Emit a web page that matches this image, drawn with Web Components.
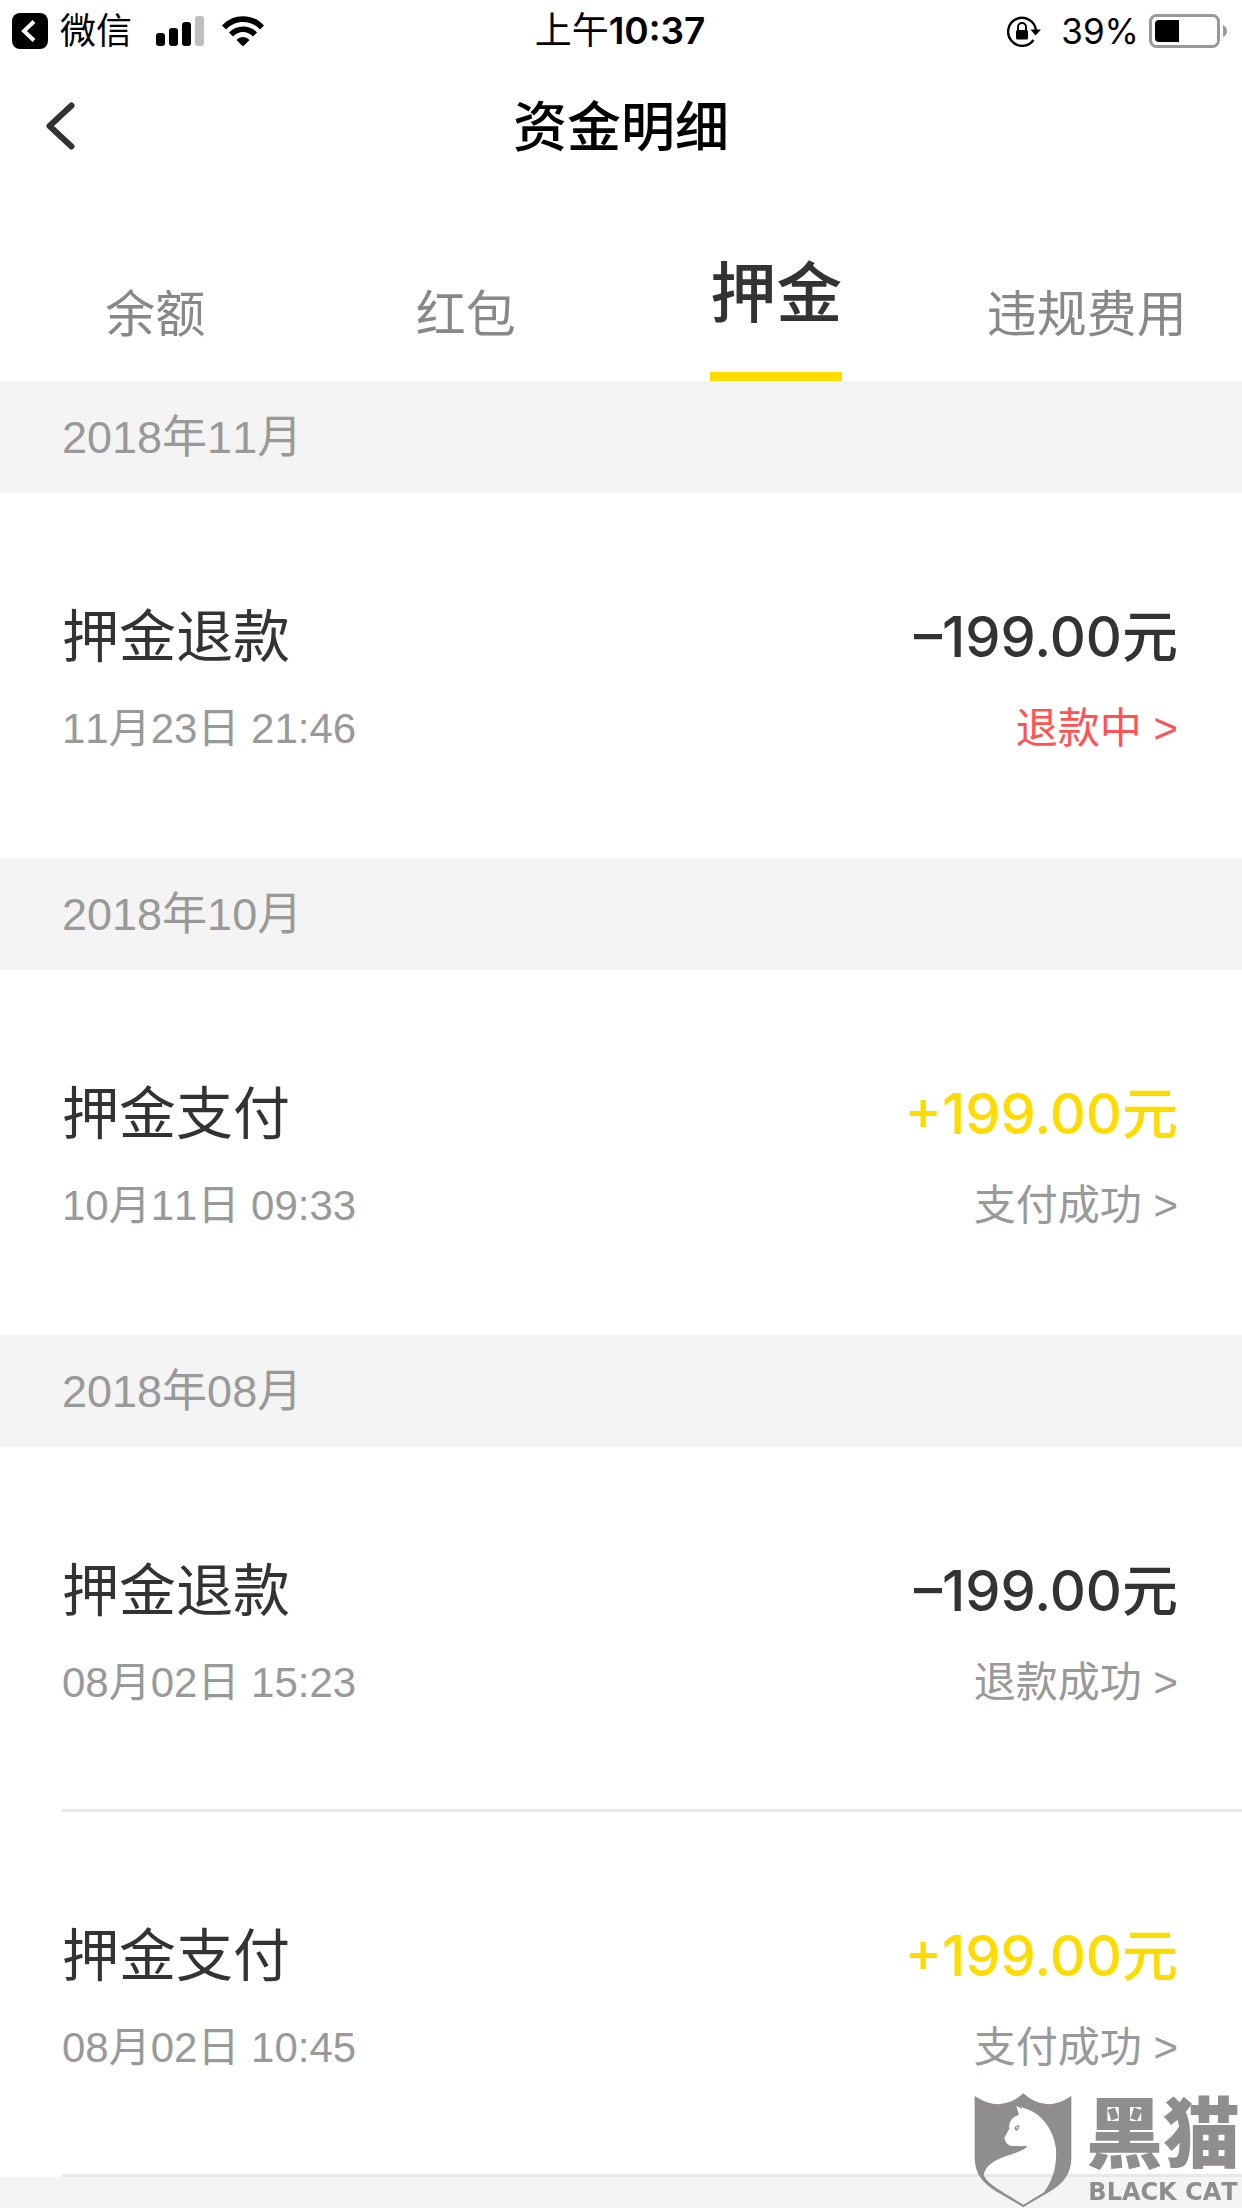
<!DOCTYPE html>
<html lang="zh-CN">
<head>
<meta charset="utf-8">
<meta name="viewport" content="width=device-width, initial-scale=1">
<title>资金明细</title>
<style>
  html, body { margin: 0; }
  body {
    background: #f4f4f4;
    color: #333;
    font-family: "Liberation Sans", "Noto Sans CJK SC", sans-serif;
    font-kerning: none;
  }
</style>
</head>
<body>
<wallet-page></wallet-page>

<script>
const define = (name, html) => customElements.define(name, class extends HTMLElement {
  constructor() {
    super();
    this.attachShadow({ mode: "open" }).innerHTML = html;
  }
});

define("status-bar", `
  <style>
    :host {
      display: grid; grid-template-columns: 1fr auto 1fr; align-items: center;
      height: 62px; padding: 0 14px 0 12px; color: #000;
      font-family: Inter, "Noto Sans CJK SC", sans-serif; font-size: 36px; line-height: 62px;
    }
    svg { display: block; flex: none; }
    .side { display: flex; align-items: center; }
    .right { justify-content: flex-end; }
    .app { margin: 0 24px 0 12px; color: inherit; text-decoration: none; }
    .wifi { margin-left: 18px; }
    .time { font-size: 37px; }
    .time b { font-weight: 600; }
    .pct { margin: 0 10px 0 20px; font-size: 35px; }
  </style>
  <div class="side">
    <svg width="36" height="36" viewBox="0 0 36 36"><rect width="36" height="36" rx="8"/><path d="M22 8.500L12 18L22 27.500" fill="none" stroke="#fff" stroke-width="4"/></svg>
    <a class="app" href="#">微信</a>
    <svg width="48" height="30" viewBox="0 0 48 30"><rect y="17" width="9" height="13" rx="3"/><rect x="13" y="12" width="9" height="18" rx="3"/><rect x="26" y="6" width="9" height="24" rx="3"/><rect x="39" width="9" height="30" rx="3" fill="#bfbfbf"/></svg>
    <svg class="wifi" width="42" height="30" viewBox="0 0 42 30"><path d="M0 9.500C11-3 31-3 42 9.500L38 13.500C29 3.500 13 3.500 4 13.500ZM7 16.500C14 8.500 28 8.500 35 16.500L31 20.500C25.500 14.500 16.500 14.500 11 20.500ZM14.500 24C18 20 24 20 27.500 24L21 30.500Z"/></svg>
  </div>
  <div class="time">上午<b>10:37</b></div>
  <div class="side right">
    <svg width="34" height="31" viewBox="0 0 34 31"><path d="M26.500 24A14 14 0 1 1 29 14" fill="none" stroke="#000" stroke-width="2.400"/><path d="M23.500 13.500H34L28.500 19.500Z"/><rect x="9" y="14" width="12" height="9.500" rx="1.500"/><path d="M11 15V11A4 4 0 0 1 19 11V15" fill="none" stroke="#000" stroke-width="2"/></svg>
    <span class="pct">39%</span>
    <svg width="79" height="34" viewBox="0 0 79 34"><rect x="1.500" y="1.500" width="68" height="31" rx="6" fill="none" stroke="#999" stroke-width="3"/><path d="M10 6H30V28H10Q6 28 6 24V10Q6 6 10 6Z"/><path d="M74 11Q78 13 78 17Q78 21 74 23Z" fill="#999"/></svg>
  </div>
`);

define("nav-header", `
  <style>
    :host { display: grid; grid-template-columns: 124px 1fr 124px; align-items: center; height: 128px; color: #000; }
    button { display: flex; align-items: center; height: 128px; padding: 0 0 0 44px; border: 0; background: none; }
    h1 { margin: 0; padding-bottom: 4px; text-align: center; font-family: "Noto Sans CJK SC", sans-serif; font-size: 54px; line-height: 80px; font-weight: 500; }
  </style>
  <button type="button" aria-label="返回">
    <svg width="32" height="50" viewBox="0 0 32 50"><path d="M27.500 4.500L5.500 25L27.500 45.500" fill="none" stroke="#333" stroke-width="6" stroke-linecap="round" stroke-linejoin="round"/></svg>
  </button>
  <h1><slot></slot></h1>
`);

define("tab-bar", `
  <style>:host { display: grid; grid-template-columns: repeat(4, 1fr); height: 191px; }</style>
  <slot></slot>
`);

define("tab-item", `
  <style>
    :host { display: flex; justify-content: center; font-family: "Noto Sans CJK SC", sans-serif; }
    button {
      display: flex; align-items: flex-end; box-sizing: border-box; padding: 0 0 35px;
      border: 0; border-bottom: 9px solid transparent; background: none; color: #888;
      font: inherit; font-size: 50px; line-height: 54px; white-space: nowrap;
    }
    :host([active]) button { padding-bottom: 48px; border-color: #ffdc00; color: #333; font-size: 66px; line-height: 72px; font-weight: 500; }
  </style>
  <button type="button"><slot></slot></button>
`);

define("month-group", `
  <style>
    :host { display: block; background: #fff; }
    h2 { height: 112px; margin: 0; padding: 0 62px; background: #f4f4f4; color: #999; font-size: 45px; line-height: 114px; font-weight: 400; }
  </style>
  <h2><slot name="month"></slot></h2>
  <slot></slot>
`);

define("fund-entry", `
  <style>
    :host { display: block; padding-left: 62px; }
    .box {
      display: grid; grid-template-columns: 1fr auto; row-gap: 22px; box-sizing: border-box; height: 365px;
      padding: 104px 64px 0 0; border-bottom: 3px solid transparent; align-content: start;
    }
    :host([divided]) .box { border-color: #e8e8e8; }
    .title, .amount { font-size: 57px; line-height: 80px; }
    .amount { font-family: Inter, "Noto Sans CJK SC", sans-serif; font-size: 56px; font-weight: 500; text-align: right; font-kerning: normal; }
    :host([income]) .amount { color: #ffdc00; }
    .date, a { color: #999; font-size: 42px; line-height: 60px; }
    a { text-decoration: none; text-align: right; }
    :host([pending]) a { color: #ff5353; }
  </style>
  <div class="box">
    <div class="title"><slot></slot></div>
    <div class="amount"><slot name="amount"></slot></div>
    <div class="date"><slot name="date"></slot></div>
    <a href="#"><slot name="state"></slot> &gt;</a>
  </div>
`);

define("black-cat-mark", `
  <style>
    :host { position: fixed; right: 2px; bottom: 0; display: flex; gap: 14px; color: #8f8d8e; pointer-events: none; }
    svg { display: block; }
    .words { display: flex; flex-direction: column; align-items: center; }
    .cn { font-family: "Liberation Sans", "Noto Sans CJK SC", sans-serif; font-size: 77px; line-height: 84px; font-weight: 900; }
    .en { font-family: "DejaVu Sans", sans-serif; font-size: 24px; line-height: 31px; font-weight: 700; }
  </style>
  <svg width="98" height="115" viewBox="98 98 294 345">
    <path fill="#8f8d8e" fill-rule="evenodd" d="M100 107Q180 160 246 99Q312 160 390 107V290C390 375 325 390 246 441C167 390 100 375 100 290ZM127 344C140 375 195 400 246 433L308 396C340 350 346 310 344 265C338 210 300 155 246 143L240 138L243 145L225 137L233 163C207 173 203 187 204 205L189 232C192 248 202 258 217 257L258 258C235 287 140 285 127 344Z"/>
    <path fill="#8f8d8e" d="M219 202Q224 194 234 195Q235 207 226 211Q219 210 219 202Z"/><path fill="#fff" d="M225 198L231 201L227 208Z"/>
  </svg>
  <div class="words"><div class="cn">黑猫</div><div class="en">BLACK CAT</div></div>
`);

define("wallet-page", `
  <style>
    :host { display: block; }
    header { background: #fff; }
  </style>
  <header>
    <status-bar></status-bar>
    <nav-header>资金明细</nav-header>
    <tab-bar>
      <tab-item>余额</tab-item>
      <tab-item>红包</tab-item>
      <tab-item active>押金</tab-item>
      <tab-item>违规费用</tab-item>
    </tab-bar>
  </header>
  <main>
    <month-group>
      <span slot="month">2018年11月</span>
      <fund-entry pending>押金退款<span slot="amount">–199.00元</span><span slot="date">11月23日 21:46</span><span slot="state">退款中</span></fund-entry>
    </month-group>
    <month-group>
      <span slot="month">2018年10月</span>
      <fund-entry income>押金支付<span slot="amount">+199.00元</span><span slot="date">10月11日 09:33</span><span slot="state">支付成功</span></fund-entry>
    </month-group>
    <month-group>
      <span slot="month">2018年08月</span>
      <fund-entry divided>押金退款<span slot="amount">–199.00元</span><span slot="date">08月02日 15:23</span><span slot="state">退款成功</span></fund-entry>
      <fund-entry income divided>押金支付<span slot="amount">+199.00元</span><span slot="date">08月02日 10:45</span><span slot="state">支付成功</span></fund-entry>
    </month-group>
  </main>
  <black-cat-mark></black-cat-mark>
`);
</script>
</body>
</html>
